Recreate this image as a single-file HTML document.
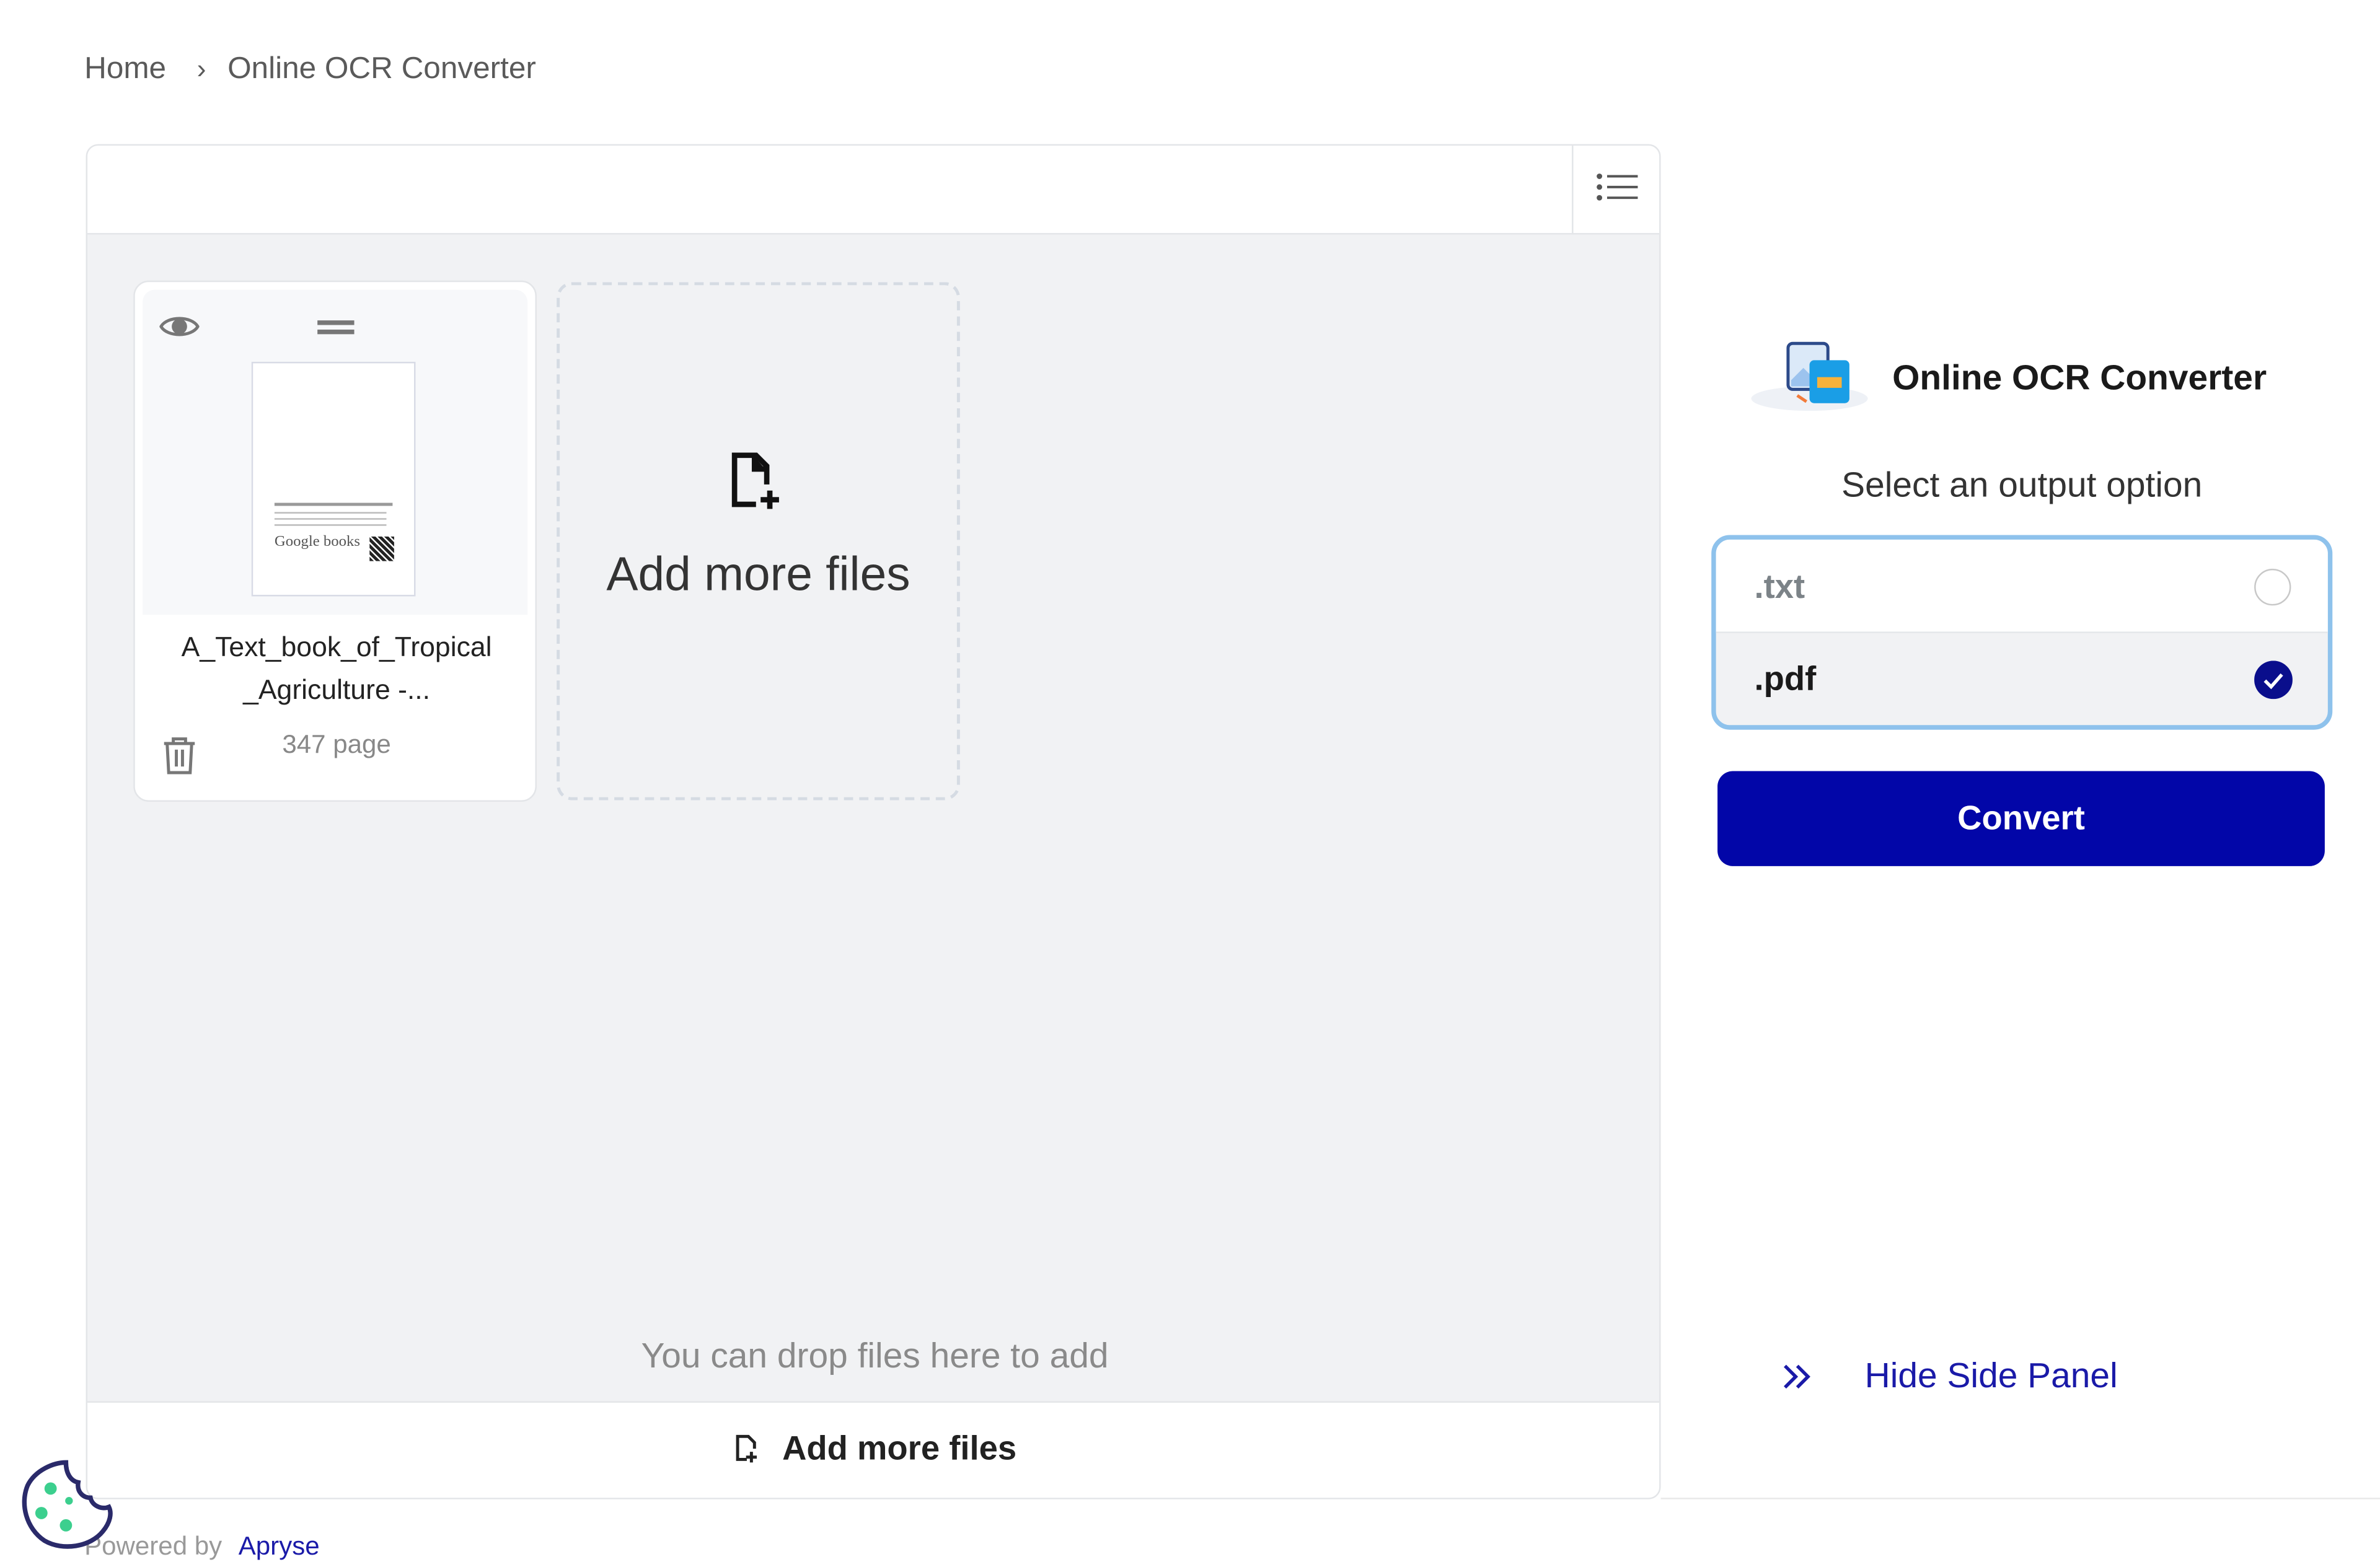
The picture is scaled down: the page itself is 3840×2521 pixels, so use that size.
<!DOCTYPE html>
<html><head><meta charset="utf-8"><style>
*{box-sizing:border-box;margin:0;padding:0}
html,body{width:3840px;height:2513px;overflow:hidden;background:#fff}
#w{position:absolute;left:0;top:0;width:1552px;height:1016px;transform:scale(2.4742);transform-origin:0 0;font-family:"Liberation Sans",sans-serif}
.a{position:absolute}
</style></head><body><div id="w">
<div class="a" style="left:55px;top:34px;font-size:20px;color:#5a5a5a;white-space:nowrap">Home<span style="margin:0 14px 0 20px;font-size:18px">›</span>Online OCR Converter</div>

<div class="a" style="left:56px;top:94px;width:1027px;height:884px;border:1px solid #e3e5e8;border-radius:8px;background:#f1f2f4;overflow:hidden">
 <div class="a" style="left:0;top:0;width:1027px;height:58px;background:#fff;border-bottom:1px solid #e3e5e8"></div>
 <div class="a" style="left:968px;top:0;width:1px;height:58px;background:#e3e5e8"></div>
 <svg class="a" style="left:984px;top:18px" width="28" height="22" viewBox="0 0 28 22" fill="none" stroke="#555" stroke-width="1.6"><circle cx="2" cy="2" r="1" fill="#555"/><circle cx="2" cy="9" r="1" fill="#555"/><circle cx="2" cy="16" r="1" fill="#555"/><path d="M7 2H27M7 9H27M7 16H27"/></svg>
 <div class="a" style="left:0;top:819px;width:1027px;height:65px;background:#fff;border-top:1px solid #e3e5e8"></div>
 <div class="a" style="left:0;top:776px;width:1027px;text-align:center;font-size:23px;color:#8a8a8a">You can drop files here to add</div>
 <div class="a" style="left:0;top:837px;width:1027px;text-align:center;font-size:22px;font-weight:bold;color:#222"><svg width="18" height="20" viewBox="0 0 18 20" style="vertical-align:-3px;margin-right:14px" fill="none" stroke="#222" stroke-width="2"><path d="M9 17H3V2H10L14 6V10"/><path d="M12 12V19M8.5 15.5H15.5"/></svg>Add more files</div>

 <div class="a" style="left:30px;top:88px;width:263px;height:340px;background:#fff;border:1px solid #e3e5e8;border-radius:10px">
  <div class="a" style="left:5px;top:5px;width:251px;height:212px;background:#f7f8fa;border-radius:8px 8px 0 0"></div>
  <svg class="a" style="left:16px;top:20px" width="26" height="18" viewBox="0 0 26 18"><path d="M1 9C5 2 21 2 25 9C21 16 5 16 1 9Z" fill="none" stroke="#777" stroke-width="2"/><circle cx="13" cy="9" r="5" fill="#777"/></svg>
  <div class="a" style="left:119px;top:25px;width:24px;height:3px;background:#777"></div>
  <div class="a" style="left:119px;top:31px;width:24px;height:3px;background:#777"></div>
  <div class="a" style="left:76px;top:52px;width:107px;height:153px;background:#fff;border:1px solid #d8dbe6">
   <div class="a" style="left:14px;top:91px;width:77px;height:2px;background:#999"></div>
   <div class="a" style="left:14px;top:97px;width:73px;height:1px;background:#bbb"></div>
   <div class="a" style="left:14px;top:101px;width:73px;height:1px;background:#bbb"></div>
   <div class="a" style="left:14px;top:105px;width:73px;height:1px;background:#bbb"></div>
   <div class="a" style="left:14px;top:111px;font-family:'Liberation Serif',serif;font-size:10px;color:#555">Google books</div>
   <div class="a" style="left:76px;top:113px;width:16px;height:16px;background:repeating-linear-gradient(45deg,#222 0 2px,#fff 2px 3px)"></div>
  </div>
  <div class="a" style="left:0;top:224px;width:263px;text-align:center;font-size:18px;line-height:28px;color:#222">A_Text_book_of_Tropical<br>_Agriculture -...</div>
  <svg class="a" style="left:18px;top:296px" width="22" height="26" viewBox="0 0 22 26" fill="none" stroke="#777" stroke-width="2"><path d="M1 5H21M7 5V2H15V5M3 5L4 24H18L19 5M9 9V20M13 9V20"/></svg>
  <div class="a" style="left:0;top:292px;width:263px;text-align:center;font-size:17px;color:#888">347 page</div>
 </div>

 <div class="a" style="left:306px;top:89px;width:263px;height:338px;border:2px dashed #d5dbe3;border-radius:10px">
  <svg class="a" style="left:110px;top:108px" width="36" height="40" viewBox="0 0 36 40" fill="none" stroke="#111" stroke-width="3.5"><path d="M18 35H4V3H18L25 10V22"/><path d="M17 4V12H24" fill="#111"/><path d="M27 26V38M21 32H33"/></svg>
  <div class="a" style="left:0;top:171px;width:259px;text-align:center;font-size:31px;color:#333">Add more files</div>
 </div>
</div>

<div class="a" style="left:1083px;top:977px;width:469px;height:1px;background:#e8e8e8"></div>

<svg class="a" style="left:1140px;top:220px" width="82" height="50" viewBox="0 0 82 50"><ellipse cx="40" cy="40" rx="38" ry="8" fill="#eef1f6"/><rect x="26" y="4" width="26" height="30" rx="3" fill="#dbe9f8" stroke="#2c4a8a" stroke-width="2"/><path d="M28 28L36 20L42 26L50 18V32H28Z" fill="#9cc3ee"/><rect x="40" y="15" width="26" height="28" rx="3" fill="#1a9ee6"/><rect x="45" y="26" width="16" height="7" fill="#f7b23b"/><path d="M32 38L38 42" stroke="#f27b3a" stroke-width="2"/></svg>
<div class="a" style="left:1234px;top:233px;font-size:23px;font-weight:bold;color:#1a1a1a">Online OCR Converter</div>
<div class="a" style="left:1117px;top:303px;width:403px;text-align:center;font-size:23px;color:#333">Select an output option</div>

<div class="a" style="left:1116px;top:349px;width:405px;height:127px;border:3px solid #8ec2ec;border-radius:12px;overflow:hidden;background:#f1f2f4">
 <div class="a" style="left:0;top:0;width:399px;height:61px;background:#fff;border-bottom:1px solid #e3e6ea"></div>
 <div class="a" style="left:25px;top:18px;font-size:22px;font-weight:bold;color:#7c8388">.txt</div>
 <div class="a" style="left:351px;top:19px;width:24px;height:24px;border:1.5px solid #c8c8c8;border-radius:50%;background:#fff"></div>
 <div class="a" style="left:25px;top:78px;font-size:22px;font-weight:bold;color:#1a1a1a">.pdf</div>
 <svg class="a" style="left:351px;top:79px" width="25" height="25" viewBox="0 0 25 25"><circle cx="12.5" cy="12.5" r="12.5" fill="#0a0e8c"/><path d="M7 13L11 17L18 9" fill="none" stroke="#fff" stroke-width="2.2"/></svg>
</div>
<div class="a" style="left:1120px;top:503px;width:396px;height:62px;background:#0206a8;border-radius:10px;color:#fff;font-size:22px;font-weight:bold;text-align:center;line-height:62px">Convert</div>

<svg class="a" style="left:1162px;top:889px" width="20" height="18" viewBox="0 0 20 18" fill="none" stroke="#1a1aa8" stroke-width="2.2"><path d="M2 2L9 9L2 16M10 2L17 9L10 16"/></svg>
<div class="a" style="left:1216px;top:884px;font-size:23px;color:#1a1aa8">Hide Side Panel</div>

<div class="a" style="left:55px;top:999px;font-size:17px;color:#999">Powered by <span style="color:#1a1aa8;margin-left:6px">Apryse</span></div>
<svg class="a" style="left:13px;top:951px" width="62" height="62" viewBox="0 0 62 62"><path d="M30 3C22 3 10 8 5 18C0 30 4 46 16 54C28 61 46 58 54 48C59 42 60 36 58 32C53 34 47 31 46 26C41 26 37 22 38 16C33 15 30 10 30 3Z" fill="#fff" stroke="#2a2a6a" stroke-width="3"/><circle cx="20" cy="20" r="4" fill="#3ccf8e"/><circle cx="14" cy="36" r="4" fill="#3ccf8e"/><circle cx="30" cy="44" r="4" fill="#3ccf8e"/><circle cx="32" cy="28" r="2.5" fill="#3ccf8e"/></svg>
</div></body></html>
